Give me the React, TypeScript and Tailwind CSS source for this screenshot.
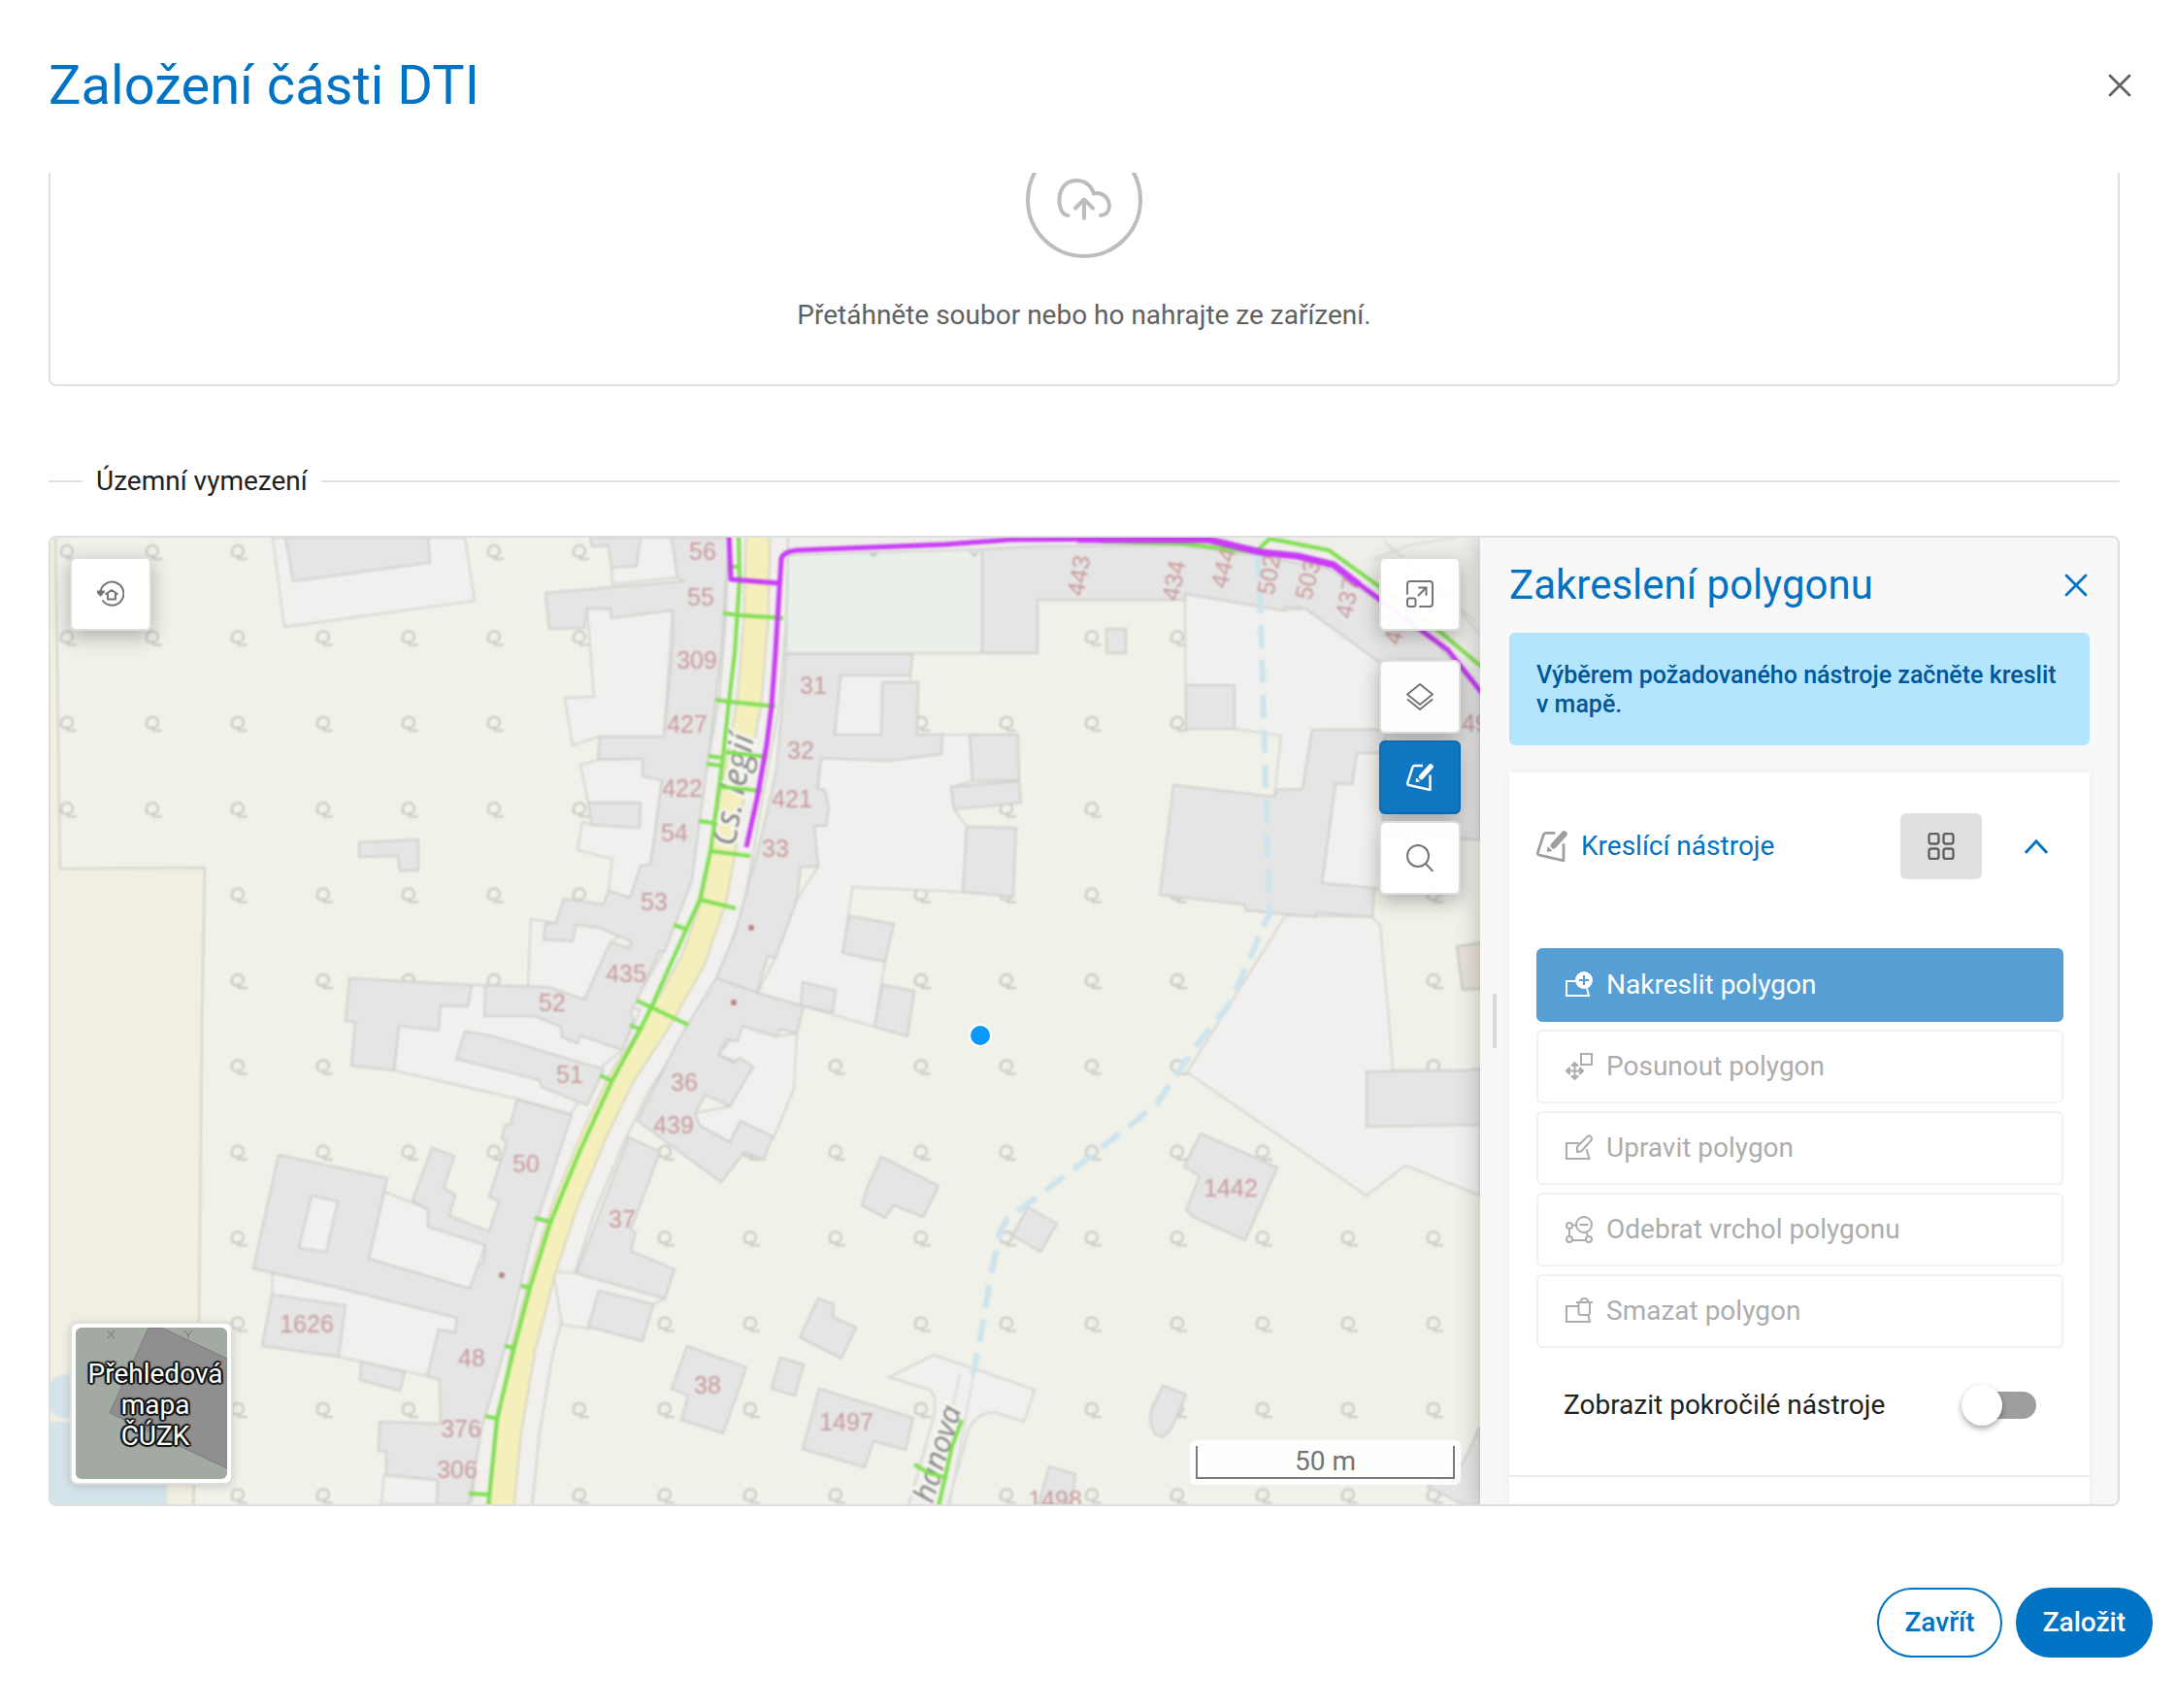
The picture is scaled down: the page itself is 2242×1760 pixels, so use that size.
import { useState } from 'react';
import type { ReactNode } from 'react';
import clsx from 'clsx';

const MEADOW_MARKS: number[][] = [
    [0, 1, 2, 5, 6],
    [0, 1, 2, 3, 4, 5, 6, 12, 13],
    [0, 1, 2, 3, 4, 5, 10, 11, 12, 13],
    [0, 1, 2, 3, 4, 5, 6, 11, 12],
    [2, 3, 4, 5, 6, 10, 11, 12, 13, 16],
    [2, 3, 4, 5, 10, 11, 12, 13, 16],
    [2, 3, 9, 10, 11, 12, 13, 16],
    [2, 3, 4, 5, 7, 8, 9, 10, 11, 12, 13, 14],
    [2, 7, 8, 9, 10, 11, 12, 13, 14, 15, 16],
    [2, 7, 8, 10, 11, 12, 13, 14, 15, 16],
    [2, 3, 4, 6, 7, 8, 10, 12, 13, 14, 15, 16],
    [2, 3, 6, 7, 8, 9, 11, 12, 13, 14, 15, 16],
];

const PARCELS = [
    '281,554 293,646 489,619 479,554',
    '656,554 692,554 698,595 631,602 630,585 656,583',
    '605,627 612,718 582,719 590,768 618,759 684,759 693,629',
    '618,783 598,788 606,827 610,850 600,847 595,876 631,885 627,918 649,925 670,891 682,804 662,782',
    '547,947 573,951 660,950 629,971 602,1030 544,1017',
    '454,1036 482,1037 486,1015 500,1015 660,1040 641,1082 619,1100 588,1148 532,1132 406,1103 411,1057',
    '396,1228 441,1246 500,1283 484,1328 380,1297',
    '281,1312 341,1325 471,1358 469,1373 440,1418 349,1398 280,1333',
    '396,1520 451,1525 450,1550 393,1550',
    '866,696 938,696 938,757 860,757',
    '846,781 916,784 971,757 999,757 1002,805 980,811 983,834 996,852 992,919 878,914 869,982 912,991 901,1058 780,1023 799,987 821,927 843,893 839,851',
    '765,1057 780,1062 800,1068 821,1065 818,1122 797,1173 763,1155 752,1177 721,1160 716,1147 752,1140 776,1099 740,1087',
    '1221,612 1322,629 1345,627 1422,683 1422,751 1352,752 1342,813 1316,814 1313,821 1320,758 1272,751 1222,751',
    '1325,943 1414,945 1422,953 1430,1040 1435,1103 1525,1103 1525,1232 1448,1201 1408,1232 1223,1105',
    '1398,776 1425,776 1425,917 1362,910 1376,807 1393,808',
    '594,1312 685,1338 673,1344 662,1350 606,1369 579,1365 570,1310',
];

const BUILDINGS = [
    '294,554 302,599 443,580 441,554',
    '370,868 431,865 431,897 412,897 410,882 370,883',
    '608,554 610,563 627,562 630,585 656,583 660,554',
    '692,554 698,595 704,599 562,611 566,648 602,647 605,627 629,627 630,637 693,629 694,657 684,759 618,759 616,782 662,782 662,800 682,804 673,873 670,891 660,892 649,925 627,918 622,932 581,926 573,951 562,952 560,968 590,970 593,953 617,956 651,970 648,977 629,971 602,1030 566,1017 500,1015 499,1047 551,1047 578,1058 579,1069 595,1075 598,1067 641,1082 653,1053 650,1044 679,980 685,980 713,907 719,860 731,773 743,673 751,554',
    '606,827 660,827 659,853 610,850',
    '360,1008 486,1015 482,1037 454,1036 452,1062 411,1057 406,1103 362,1098 366,1053 356,1052',
    '479,1063 505,1067 622,1102 605,1139 558,1120 556,1113 470,1091',
    '533,1133 589,1149 547,1277 525,1373 496,1473 483,1550 450,1550 451,1525 398,1520 398,1495 390,1495 391,1465 454,1467 453,1422 440,1418 452,1370 469,1373 471,1358 341,1325 261,1307 287,1190 399,1214 380,1297 484,1328 493,1303 498,1302 500,1283 441,1264 441,1246 425,1237 445,1183 468,1191 457,1224 469,1231 463,1253 504,1269 514,1238 504,1233 522,1177 517,1173 520,1160 526,1158',
    '280,1334 356,1345 349,1398 270,1387',
    '372,1403 417,1414 412,1433 371,1422',
    '1012,566 1069,563 1216,562 1299,573 1371,587 1468,650 1525,713 1525,865 1425,863 1422,683 1345,627 1325,625 1322,629 1221,612 1220,618 1069,618 1069,673 1012,673',
    '1222,706 1272,706 1272,751 1222,751',
    '1140,648 1160,648 1160,673 1140,673',
    '810,674 940,674 938,696 866,696 860,757 908,757 909,703 946,703 945,757 971,757 970,777 947,780 916,784 846,781 842,812 850,814 854,833 851,851 839,851 843,893 825,893 821,927 799,987 791,985 780,1023 738,1008 757,963 782,873 800,793 806,727',
    '738,1008 780,1023 828,1037 821,1065 804,1060 800,1068 780,1062 765,1057 760,1073 749,1071 740,1087 756,1095 762,1090 776,1099 752,1140 727,1128 716,1147 721,1160 752,1177 763,1155 796,1171 787,1195 767,1187 743,1218 657,1155 700,1070',
    '999,757 1049,757 1050,804 1002,805',
    '980,811 1050,805 1052,827 983,834',
    '996,852 1047,853 1044,924 992,919',
    '875,944 921,952 912,991 868,982',
    '827,1012 861,1020 858,1043 825,1036',
    '909,1015 942,1021 935,1068 901,1058',
    '1209,809 1313,821 1316,814 1342,813 1352,752 1430,752 1422,776 1398,776 1393,808 1376,807 1362,910 1416,915 1414,945 1357,940 1356,945 1284,938 1282,932 1195,922',
    '1408,1104 1512,1103 1525,1101 1525,1159 1408,1161',
    '1237,1168 1316,1203 1283,1278 1231,1255 1222,1247 1236,1212 1220,1202',
    '908,1192 967,1222 951,1254 921,1242 912,1255 888,1242 894,1222',
    '1059,1244 1089,1261 1072,1290 1043,1273',
    '843,1338 859,1344 858,1357 882,1368 867,1400 824,1378',
    '804,1399 828,1406 819,1438 795,1431',
    '844,1431 941,1461 933,1494 900,1485 891,1512 827,1493',
    '1198,1428 1222,1437 1207,1472 1198,1481 1190,1478 1185,1465 1186,1453',
    '1081,1511 1108,1519 1104,1550 1070,1550',
    '1525,1470 1507,1508 1471,1532 1507,1550 1525,1550',
    '708,1387 769,1409 745,1477 702,1463 709,1438 692,1431',
    '648,1172 680,1187 650,1267 655,1270 650,1289 695,1308 685,1338 594,1312',
    '617,1330 673,1344 662,1382 606,1367',
];

const ROAD =
    'M781 550 779 637 772 723 755 817 745 877 736 927 714 990 680 1050 641 1110 612 1170 583 1240 559 1313 539 1390 525 1473 517 1552';

const GREEN_LINES = [
    'M761 550 762 597 757 673 751 723 745 780 738 833 732 877 721 927 706 960 671 1038 660 1060 631 1113 597 1187 567 1260 546 1327 530 1388 512 1462 503 1552',
    'M745 632 762 634 807 637M750 584H761M737 721 751 723 799 728M730 779 745 781M748 775 791 780M728 787 743 789M743 811 785 815M720 846 736 848',
    'M732 877 773 882M721 927 758 936M694 953 706 957M656 1031 671 1038 709 1056M649 1056 660 1061M618 1108 631 1114M551 1255 567 1259M537 1325 546 1327M520 1387 531 1389M500 1459 513 1462M483 1539 503 1540',
    'M1134 558 1216 560 1294 569 1308 555 1369 567 1425 607 1485 652 1530 690',
    'M991 1463 981 1490 967 1552M942 1509 957 1518 976 1523',
];

type HouseNumber = [text: string, x: number, y: number, angle?: number];

const HOUSE_NUMBERS: HouseNumber[] = [
    ['56', 724, 568], ['55', 722, 615], ['309', 718, 680], ['427', 708, 746],
    ['422', 703, 812], ['54', 695, 858], ['53', 674, 929], ['435', 645, 1003],
    ['52', 569, 1033], ['51', 587, 1107], ['50', 542, 1199], ['1626', 316, 1364],
    ['48', 486, 1399], ['376', 475, 1472], ['306', 471, 1514], ['36', 705, 1115],
    ['439', 694, 1159], ['37', 641, 1256], ['38', 729, 1427], ['1497', 872, 1465],
    ['1498', 1087, 1545], ['1442', 1268, 1224], ['31', 838, 706], ['32', 825, 773],
    ['421', 816, 823], ['33', 799, 874], ['49', 1520, 745],
    ['443', 1111, 593, -80], ['434', 1209, 598, -80], ['444', 1260, 585, -76],
    ['502', 1307, 592, -80], ['503', 1347, 597, -76], ['437', 1388, 616, -78],
    ['49', 1437, 650, -76],
];

function MapCanvas() {
    return (
        <svg
            className="absolute inset-0 h-full w-full"
            viewBox="52 554 1473 996"
            preserveAspectRatio="xMidYMid slice"
            role="img"
            aria-label="Mapa"
        >
            <g className="blur-[1px]">
                <rect x="40" y="540" width="1500" height="1030" fill="#f0f1e9" />
                <path d="M40 540H57L62 895 211 894 208 1060 205 1363 199 1560H40Z" fill="#f1eee2" stroke="#d3d2cb" strokeWidth="2" />
                <circle cx="70" cy="1439" r="23" fill="#d4e3e9" />
                <path d="M40 1465H172V1560H40Z" fill="#d4e3e9" />
                <path d="M794 540H1540V900L1422 683 1345 627 1216 562 1012 566 812 572V680H790Z" fill="#efeeeb" />
                <path d="M1425 557 1520 640M1415 577 1450 562 1500 554M1480 600 1530 660" fill="none" stroke="#dcdbd8" strokeWidth="2" />

                {MEADOW_MARKS.map((columns, row) =>
                    columns.map(column => (
                        <path
                            key={`${row}-${column}`}
                            transform={`translate(${70 + column * 88} ${569 + row * 88.4})`}
                            d="M-6 4C-9-1-6-7-1-7S7-1 3 3C1 5-3 4-6 4M0 4V7H9"
                            fill="none"
                            stroke="#c6c7c0"
                            strokeWidth="2"
                        />
                    )),
                )}

                <path d={ROAD} fill="none" stroke="#d3d3cf" strokeWidth="64" />
                <path d={ROAD} fill="none" stroke="#f1f0ee" strokeWidth="60" />
                <g fill="#f1f0ee" stroke="#d6d6d2" strokeWidth="2">
                    {PARCELS.map(points => (
                        <polygon key={points} points={points} />
                    ))}
                    <path d="M962 1396 1066 1432 1055 1465 1027 1456Q1008 1453 998 1473L976 1552H936L960 1467Q968 1438 957 1432L916 1419Z" />
                </g>
                <path d="M989 1415 960 1552M1003 1417 978 1552" stroke="#dddcda" strokeWidth="2" />
                <polygon points="812,572 1012,566 1012,673 810,673" fill="#e9f0ea" stroke="#d6d6d2" strokeWidth="2" />
                <g fill="#e5e5e5" stroke="#d0d0cd" strokeWidth="2">
                    {BUILDINGS.map(points => (
                        <polygon key={points} points={points} />
                    ))}
                </g>
                <polygon points="321,1232 348,1238 336,1290 308,1286" fill="#f1f0ee" stroke="#d0d0cd" strokeWidth="2" />
                <polygon points="1501,975 1530,971 1530,1018 1507,1020" fill="#e6e0d9" stroke="#c9c7c2" strokeWidth="2" />
                <path d="M896 569 900 573 904 569M1000 568 1004 573 1008 568" fill="none" stroke="#c3c4bd" strokeWidth="2" />

                <path d={ROAD} fill="none" stroke="#d9d7c4" strokeWidth="27" />
                <path d={ROAD} fill="none" stroke="#f4efbb" strokeWidth="23" />
                <path
                    d="M1296 572 1299 640 1303 773 1308 942 1301 955 1287 990 1265 1037 1233 1077 1192 1137 1168 1157 1119 1195 1037 1257 1030 1270 1020 1320 1008 1390 1002 1417"
                    fill="none"
                    stroke="#cde4ec"
                    strokeWidth="6"
                    strokeDasharray="24 12"
                />
                <g fill="#b98080">
                    <circle cx="774" cy="956" r="3" />
                    <circle cx="756" cy="1033" r="3" />
                    <circle cx="517" cy="1314" r="3" />
                </g>
                <g fill="#c99a9b" fontFamily="Liberation Sans, sans-serif" fontSize="25" textAnchor="middle">
                    {HOUSE_NUMBERS.map(([text, x, y, angle = 0]) => (
                        <text key={`${text}-${x}`} transform={`translate(${x} ${y}) rotate(${angle})`} y="9">
                            {text}
                        </text>
                    ))}
                </g>
                <g
                    fill="#7f7f7f"
                    stroke="#f7f6f2"
                    strokeWidth="6"
                    paintOrder="stroke"
                    fontFamily="Open Sans, sans-serif"
                    fontStyle="italic"
                >
                    <text transform="translate(757 873) rotate(-80)" fontSize="35">Cs. legií</text>
                    <text transform="translate(961 1550) rotate(-73)" fontSize="31">hanova</text>
                </g>
                <g fill="none" stroke="#7fe052" strokeWidth="4">
                    {GREEN_LINES.map(d => (
                        <path key={d} d={d} />
                    ))}
                </g>
                <g fill="none" stroke="#c83cf5" strokeWidth="5" strokeLinejoin="round">
                    <path d="M751 550 753 597 803 601" />
                    <path d="M1530 718 1492 670 1422 618 1374 582 1337 573 1299 569 1245 557 1216 555 1042 556 974 561 821 567Q805 569 805 577L803 607 799 673 795 727 790 767 780 823 769 873" />
                    <path d="M1110 556H1245L1299 569 1337 573 1374 582 1400 602" strokeWidth="7" />
                </g>
            </g>
            <circle cx="1010" cy="1067" r="11" fill="#0a98ff" stroke="#ffffff" strokeWidth="2" />
        </svg>
    );
}

function Icon({ children, className = 'h-7 w-7' }: { children: ReactNode; className?: string }) {
    return (
        <svg
            className={clsx('shrink-0', className)}
            viewBox="0 0 28 28"
            fill="none"
            stroke="currentColor"
            strokeWidth="2"
            strokeLinejoin="round"
            aria-hidden="true"
        >
            {children}
        </svg>
    );
}

const CloseIcon = ({ className }: { className?: string }) => (
    <Icon className={className}>
        <path d="M4 4 24 24M24 4 4 24" strokeWidth="2.8" strokeLinecap="round" />
    </Icon>
);

const HomeResetIcon = () => (
    <Icon>
        <path d="M3.5 12A12 12 0 1 1 5.5 20.5" />
        <path d="M0 11.5H7L3.5 15.5Z" fill="currentColor" />
        <path d="M8.5 14.5 15 10 21.5 14.5M11 13.5V19.5H19V13.5" />
    </Icon>
);

const ExpandIcon = () => (
    <Icon>
        <path d="M1 14V4Q1 1 4 1H24Q27 1 27 4V24Q27 27 24 27H14M12.5 15.5 20.5 7.5M13 7.5H20.5V15" strokeLinecap="round" />
        <rect x="1" y="18.5" width="8.5" height="8.5" rx="2" />
    </Icon>
);

const LayersIcon = () => (
    <Icon>
        <path d="M14 1 27 11.5 14 22 1 11.5ZM1 16.5 14 27 27 16.5" />
    </Icon>
);

const DrawIcon = ({ className }: { className?: string }) => (
    <Icon className={className}>
        <path d="M17 2H8.5Q7 2 6.5 3.5L1.3 19.5Q.7 21.5 2.7 22L24.5 27V11.5" strokeWidth="2.4" />
        <path d="M25 3 15.5 13.5" strokeWidth="5.5" strokeLinecap="round" />
        <path d="M10.5 15 13.5 18 10 18.5Z" fill="currentColor" strokeWidth="1" />
    </Icon>
);

const SearchIcon = () => (
    <Icon>
        <circle cx="12" cy="12" r="11" />
        <path d="M20 20 27 27.5" strokeLinecap="round" />
    </Icon>
);

const TilesIcon = () => (
    <Icon>
        <g strokeWidth="2.4">
            <rect x="1.5" y="1" width="10" height="10.5" rx="2.5" />
            <rect x="16.5" y="1" width="10" height="10.5" rx="2.5" />
            <rect x="1.5" y="16.5" width="10" height="10.5" rx="2.5" />
            <rect x="16.5" y="16.5" width="10" height="10.5" rx="2.5" />
        </g>
    </Icon>
);

const AddPolygonIcon = () => (
    <Icon>
        <path d="M11 10H1V25H24L22 17" strokeLinejoin="miter" />
        <circle cx="19" cy="9" r="9" fill="currentColor" stroke="none" />
        <path d="M14 9H24M19 4V14" stroke="#559fd5" />
    </Icon>
);

const MovePolygonIcon = () => (
    <Icon>
        <rect x="16" y="1" width="11" height="11" strokeLinejoin="miter" />
        <path d="M1 18.5H18M9.5 10V27" />
        <path d="M4 15.5 1 18.5 4 21.5ZM15 15.5 18 18.5 15 21.5ZM6.5 13 9.5 10 12.5 13ZM6.5 24 9.5 27 12.5 24Z" fill="currentColor" />
    </Icon>
);

const EditPolygonIcon = () => (
    <Icon>
        <path d="M14 9H1V25H24.5L21.5 15" strokeLinejoin="miter" />
        <path d="M12 18V12.500L22.5 2.2Q24.5 .5 26.3 2.5 27.8 4.5 26 6.5L16 17.5Z" />
    </Icon>
);

const RemoveVertexIcon = () => (
    <Icon>
        <circle cx="19" cy="9" r="8" />
        <circle cx="4" cy="10" r="3" />
        <circle cx="4" cy="24" r="3" />
        <circle cx="24" cy="24" r="3" />
        <path d="M14.5 9H23.5M7 9.5H11M4 13V21M7 25H21M21.5 17 23 21" />
    </Icon>
);

const DeletePolygonIcon = () => (
    <Icon>
        <path d="M13 9H1V25H25L23.5 18" strokeLinejoin="miter" />
        <path d="M13.5 5V15.5Q13.5 18 16 18H22.5Q25 18 25 15.5V5M11 5H28M15.5 5Q15.5 1 19.5 1T23 5" />
    </Icon>
);

const TOOLS = [
    { id: 'draw', label: 'Nakreslit polygon', icon: <AddPolygonIcon /> },
    { id: 'move', label: 'Posunout polygon', icon: <MovePolygonIcon /> },
    { id: 'edit', label: 'Upravit polygon', icon: <EditPolygonIcon /> },
    { id: 'remove-vertex', label: 'Odebrat vrchol polygonu', icon: <RemoveVertexIcon /> },
    { id: 'delete', label: 'Smazat polygon', icon: <DeletePolygonIcon /> },
];

type MapButtonProps = { label: string; active?: boolean; children: ReactNode };

function MapButton({ label, active, children }: MapButtonProps) {
    return (
        <button
            type="button"
            aria-label={label}
            className={clsx(
                'flex h-[76px] w-[84px] items-center justify-center rounded-md border-2 shadow-[0_6px_20px_rgba(0,0,0,0.28)]',
                active
                    ? 'border-[#0e6bb0] bg-[#1077c3] text-white'
                    : 'border-[#dededc] bg-white/95 bg-clip-padding text-[#757575]',
            )}
        >
            {children}
        </button>
    );
}

function MapView() {
    return (
        <div className="relative min-w-0 flex-1 overflow-hidden">
            <MapCanvas />
            <div className="absolute top-5 left-5">
                <MapButton label="Výchozí pohled">
                    <HomeResetIcon />
                </MapButton>
            </div>
            <div className="absolute top-5 right-5 flex flex-col">
                <MapButton label="Zvětšit mapu">
                    <ExpandIcon />
                </MapButton>
                <div className="mt-[30px] flex flex-col gap-[7px]">
                    <MapButton label="Vrstvy">
                        <LayersIcon />
                    </MapButton>
                    <MapButton label="Kreslení" active>
                        <DrawIcon />
                    </MapButton>
                    <MapButton label="Hledat">
                        <SearchIcon />
                    </MapButton>
                </div>
            </div>
            <button
                type="button"
                className="absolute bottom-5 left-5 h-[168px] w-[168px] rounded-lg border-2 border-[#dededc] bg-white p-1 shadow-[0_2px_8px_rgba(0,0,0,0.15)]"
            >
                <span className="relative flex h-full items-center justify-center overflow-hidden rounded-md bg-[#a3aaa2] pt-1 pl-2">
                    <svg className="absolute inset-0 h-full w-full" viewBox="0 0 156 156" aria-hidden="true">
                        <path d="M75 0 35 88 156 145V32L88 0Z" fill="#908f8f" stroke="#7c7b7b" strokeWidth="1" />
                        <path d="M33 3 40 11M40 3 33 11M112 3 116 8 120 3M116 8V11" stroke="#6f746e" strokeWidth="1" fill="none" />
                    </svg>
                    <span className="relative text-[28px] leading-8 text-white [text-shadow:-2px_-1px_1px_#111,2px_-1px_1px_#111,-2px_1px_1px_#111,2px_1px_1px_#111,0_2px_1px_#111,0_-2px_1px_#111]">
                        Přehledová
                        <br />
                        mapa
                        <br />
                        ČÚZK
                    </span>
                </span>
            </button>
            <div className="absolute right-5 bottom-5 w-[279px] rounded-md bg-white/90 p-[6px]">
                <div className="border-2 border-t-0 border-[#7b7b7b] text-center text-[28px] leading-8 text-[#757575]">
                    50 m
                </div>
            </div>
        </div>
    );
}

function PolygonPanel() {
    const [activeTool, setActiveTool] = useState('draw');
    const [advanced, setAdvanced] = useState(false);

    return (
        <aside className="relative flex w-[657px] shrink-0 flex-col bg-[#f8f8f8] pt-[25px] pr-[29px] pl-[30px] shadow-[0_0_24px_rgba(0,0,0,0.25)]">
            <div className="absolute top-[470px] left-[13px] h-14 w-1 bg-[#d9d9d9]" />
            <div className="flex items-center justify-between">
                <h2 className="text-[42px] leading-[48px] text-[#0173c4]">Zakreslení polygonu</h2>
                <button type="button" aria-label="Zavřít panel" className="text-[#0173c4]">
                    <CloseIcon />
                </button>
            </div>

            <p className="mt-[25px] rounded-md bg-[#b3e5fc] px-7 pt-[29px] pb-[27px] text-[25px] leading-[30px] font-medium text-[#01579b]">
                Výběrem požadovaného nástroje začněte kreslit v mapě.
            </p>

            <section className="mt-7 bg-white pt-[42px] pr-[27px] pl-7 shadow-[0_0_8px_rgba(0,0,0,0.06)]">
                <div className="flex items-center text-[#0173c4]">
                    <DrawIcon className="h-8 w-8 text-[#9e9e9e]" />
                    <h3 className="ml-[14px] flex-1 text-[28px] leading-8">Kreslící nástroje</h3>
                    <button
                        type="button"
                        aria-label="Zobrazení dlaždic"
                        className="flex h-[68px] w-[84px] items-center justify-center rounded-md bg-[#e0e0e0] text-[#616161]"
                    >
                        <TilesIcon />
                    </button>
                    <button type="button" aria-label="Sbalit" className="ml-7 px-4">
                        <Icon className="h-6 w-6">
                            <path d="M2 21 14 8 26 21" strokeWidth="3.5" strokeLinecap="round" strokeLinejoin="miter" />
                        </Icon>
                    </button>
                </div>

                <div className="mt-[71px] flex flex-col gap-2">
                    {TOOLS.map(tool => (
                        <button
                            key={tool.id}
                            type="button"
                            onClick={() => setActiveTool(tool.id)}
                            className={clsx(
                                'flex h-[76px] items-center gap-[14px] rounded-md border-2 px-7 text-left text-[28px] leading-8',
                                activeTool === tool.id
                                    ? 'border-[#559fd5] bg-[#559fd5] text-white'
                                    : 'border-[#f1f1f1] text-[#adadad]',
                            )}
                        >
                            {tool.icon}
                            {tool.label}
                        </button>
                    ))}
                </div>

                <label className="mt-[35px] flex h-12 items-center justify-between px-7 text-[28px] text-[#212121]">
                    Zobrazit pokročilé nástroje
                    <input
                        type="checkbox"
                        role="switch"
                        checked={advanced}
                        onChange={event => setAdvanced(event.target.checked)}
                        className="relative h-7 w-[72px] appearance-none rounded-full bg-[#9e9e9e] before:absolute before:-top-[7px] before:-left-[5px] before:h-[42px] before:w-[42px] before:rounded-full before:bg-white before:shadow-[0_3px_6px_rgba(0,0,0,0.35)] checked:bg-[#559fd5] checked:before:left-[35px]"
                    />
                </label>
                <hr className="-mr-[27px] -ml-7 mt-12 border-t-2 border-[#e8ecf0]" />
                <div className="h-20" />
            </section>
        </aside>
    );
}

export default function App() {
    return (
        <div className="flex h-screen flex-col overflow-hidden bg-white font-[Roboto,sans-serif]">
            <header className="flex shrink-0 items-center justify-between pt-14 pr-11 pb-[58px] pl-[50px]">
                <h1 className="text-[56px] leading-[64px] text-[#0173c4]">Založení části DTI</h1>
                <button type="button" aria-label="Zavřít" className="text-[#616161]">
                    <CloseIcon />
                </button>
            </header>

            <main className="flex min-h-0 flex-1 flex-col overflow-hidden pr-[58px] pl-[50px]">
                <div className="-mt-10 flex shrink-0 flex-col items-center rounded-lg border-2 border-[#e0e0e0] pt-[6px] pb-[51px]">
                    <div className="flex h-[120px] w-[120px] items-center justify-center rounded-full border-4 border-[#bdbdbd] text-[#bdbdbd]">
                        <svg className="h-14 w-14" viewBox="0 0 56 56" fill="none" stroke="currentColor" strokeWidth="4" strokeLinecap="round" strokeLinejoin="round" aria-hidden="true">
                            <path d="M11.5 44C6.5 44 4.5 40 3 34 .5 20 7 8 20 8 29 8 35 13 38 21.5 47 19.5 54 26 54 35 53 41 50 44 45 44" />
                            <path d="M28 47V28M19 36.5 28 27.5 37 36.5" />
                        </svg>
                    </div>
                    <p className="mt-[39px] text-[28px] leading-10 text-[#616161]">
                        Přetáhněte soubor nebo ho nahrajte ze zařízení.
                    </p>
                </div>

                <div className="mt-[78px] flex shrink-0 items-center gap-[14px] text-[28px] leading-10 text-[#212121]">
                    <span className="h-[2px] w-[35px] bg-[#e0e0e0]" />
                    <h2>Územní vymezení</h2>
                    <span className="h-[2px] flex-1 bg-[#e0e0e0]" />
                </div>

                <div className="mt-9 flex min-h-0 flex-1 overflow-hidden rounded-lg border-2 border-[#dedede]">
                    <MapView />
                    <PolygonPanel />
                </div>
            </main>

            <footer className="flex shrink-0 justify-end gap-[14px] pt-[84px] pr-6 pb-[52px] text-[28px] font-medium">
                <button type="button" className="h-[72px] rounded-full border-2 border-[#0173c4] px-[26px] text-[#0173c4]">
                    Zavřít
                </button>
                <button type="button" className="h-[72px] rounded-full border-2 border-[#0173c4] bg-[#0173c4] px-[26px] text-white">
                    Založit
                </button>
            </footer>
        </div>
    );
}
